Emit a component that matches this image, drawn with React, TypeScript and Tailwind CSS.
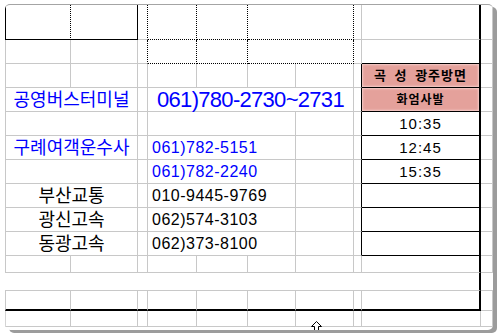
import React from 'react';

// grid line styles per side
const R: Record<string, string> = {
  g: 'border-r border-r-[#c8c8c8]',
  k: 'border-r border-r-black',
  d: 'border-r border-r-black [border-right-style:dotted]!',
  K: 'border-r-2 border-r-black',
  n: '',
};
const B: Record<string, string> = {
  g: 'border-b border-b-[#c8c8c8]',
  k: 'border-b border-b-black',
  d: 'border-b border-b-black [border-bottom-style:dotted]!',
  K: 'border-b-2 border-b-black',
  n: '',
};

type CellProps = {
  w: string;
  r?: string;
  b?: string;
  className?: string;
  children?: React.ReactNode;
};

function Cell({ w, r = 'g', b = 'g', className = '', children }: CellProps) {
  return (
    <div className={`${w} ${R[r]} ${B[b]} shrink-0 flex items-center leading-none whitespace-nowrap ${className}`}>
      {children}
    </div>
  );
}

const lines = [
  { name: '', blue: false, phone: '', phoneBlue: false, time: '10:35' },
  { name: '구례여객운수사', blue: true, phone: '061)782-5151', phoneBlue: true, time: '12:45' },
  { name: '', blue: false, phone: '061)782-2240', phoneBlue: true, time: '15:35' },
  { name: '부산교통', blue: false, phone: '010-9445-9769', phoneBlue: false, time: '' },
  { name: '광신고속', blue: false, phone: '062)574-3103', phoneBlue: false, time: '' },
  { name: '동광고속', blue: false, phone: '062)373-8100', phoneBlue: false, time: '' },
];

const pink = 'bg-[#e4a19b] shadow-[inset_0_0_2px_1px_#f4cdc9] justify-center font-bold';

export default function App() {
  return (
    <div className="w-[499px] h-[336px] overflow-hidden bg-white text-black font-['Liberation_Sans','Noto_Sans_CJK_KR',sans-serif]">
      <div className="relative ml-[5px] mt-[4px] w-[488px] h-[326px] overflow-hidden rounded-[5px] border-t border-t-[#a4a4a4] bg-white shadow-[4px_3px_0_#9c9c9c]">
        {/* top rows, dotted print block */}
        <div className="flex h-[35px]">
          <Cell w="w-[66px]" r="d" b="k" className="border-l border-l-black" />
          <Cell w="w-[67px]" r="k" b="k" />
          <Cell w="w-[10px]" r="d" />
          <Cell w="w-[49px]" r="d" b="d" />
          <Cell w="w-[51px]" r="d" b="d" />
          <Cell w="w-[106px]" r="d" b="d" />
          <Cell w="w-[8px]" />
          <Cell w="w-[119px]" r="K" />
          <Cell w="w-[12px]" />
        </div>
        <div className="flex h-[24px]">
          <Cell w="w-[66px]" className="border-l border-l-[#c8c8c8]" />
          <Cell w="w-[67px]" />
          <Cell w="w-[10px]" r="d" />
          <Cell w="w-[49px]" r="d" b="d" />
          <Cell w="w-[51px]" r="d" b="d" />
          <Cell w="w-[106px]" r="d" b="d" />
          <Cell w="w-[8px]" />
          <Cell w="w-[119px]" r="K" b="k" />
          <Cell w="w-[12px]" />
        </div>
        <div className="flex h-[24px]">
          <Cell w="w-[66px]" className="border-l border-l-[#c8c8c8]" />
          <Cell w="w-[67px]" />
          <Cell w="w-[10px]" />
          <Cell w="w-[49px]" />
          <Cell w="w-[51px]" />
          <Cell w="w-[48px]" />
          <Cell w="w-[58px]" />
          <Cell w="w-[8px]" r="k" />
          <Cell w="w-[119px]" r="K" b="k" className={`${pink} text-[13px] tracking-[1px] [word-spacing:3px]`}>
            곡 성 광주방면
          </Cell>
          <Cell w="w-[12px]" />
        </div>
        <div className="flex h-[24px]">
          <Cell w="w-[133px]" className="border-l border-l-[#c8c8c8] justify-center text-[18px] text-[#0000ff]">
            공영버스터미널
          </Cell>
          <Cell w="w-[10px]" />
          <Cell w="w-[206px]" className="justify-center text-[22px] tracking-[-0.7px] text-[#0000ff]">
            061)780-2730~2731
          </Cell>
          <Cell w="w-[8px]" r="k" />
          <Cell w="w-[119px]" r="K" b="k" className={`${pink} text-[12px] tracking-[1px]`}>
            화엄사발
          </Cell>
          <Cell w="w-[12px]" />
        </div>

        {/* company rows with timetable */}
        {lines.map((l, i) => (
          <div key={i} className="flex h-[24px]">
            <Cell
              w="w-[133px]"
              className={`border-l border-l-[#c8c8c8] justify-center text-[18px] ${l.blue ? 'text-[#0000ff]' : 'text-black'}`}
            >
              {l.name}
            </Cell>
            <Cell w="w-[10px]" />
            <Cell
              w="w-[148px]"
              className={`pl-[4px] text-[16px] tracking-[0.5px] ${l.phoneBlue ? 'text-[#0000ff]' : 'text-black'}`}
            >
              {l.phone}
            </Cell>
            <Cell w="w-[58px]" />
            <Cell w="w-[8px]" r="k" />
            <Cell w="w-[119px]" r="K" b="k" className="justify-center text-[15px] tracking-[1px]">
              {l.time}
            </Cell>
            <Cell w="w-[12px]" />
          </div>
        ))}

        <div className="flex h-[17px]">
          <Cell w="w-[66px]" className="border-l border-l-[#c8c8c8]" />
          <Cell w="w-[67px]" />
          <Cell w="w-[10px]" />
          <Cell w="w-[49px]" />
          <Cell w="w-[51px]" />
          <Cell w="w-[48px]" />
          <Cell w="w-[58px]" />
          <Cell w="w-[8px]" />
          <Cell w="w-[119px]" r="K" />
          <Cell w="w-[12px]" />
        </div>
        {/* page gap */}
        <div className="flex h-[18px]">
          <Cell w="w-[357px]" r="n" />
          <Cell w="w-[119px]" r="K" />
          <Cell w="w-[12px]" r="n" />
        </div>
        <div className="flex h-[20px]">
          <Cell w="w-[66px]" b="K" className="border-l border-l-[#c8c8c8]" />
          <Cell w="w-[67px]" b="K" />
          <Cell w="w-[10px]" b="K" />
          <Cell w="w-[49px]" b="K" />
          <Cell w="w-[51px]" b="K" />
          <Cell w="w-[48px]" b="K" />
          <Cell w="w-[58px]" b="K" />
          <Cell w="w-[8px]" b="K" />
          <Cell w="w-[119px]" r="K" b="K" />
          <Cell w="w-[12px]" />
        </div>
        <div className="flex h-[16px]">
          <Cell w="w-[66px]" className="border-l border-l-[#d4d4d4]" />
          <Cell w="w-[67px]" />
          <Cell w="w-[10px]" />
          <Cell w="w-[49px]" />
          <Cell w="w-[51px]" />
          <Cell w="w-[48px]" />
          <Cell w="w-[58px]" />
          <Cell w="w-[8px]" />
          <Cell w="w-[119px]" />
          <Cell w="w-[12px]" />
        </div>

        {/* mouse cursor over the sheet */}
        <svg className="absolute left-[306px] top-[316px]" width="11" height="10" viewBox="0 0 11 10">
          <path d="M5.5 0.5 L10.5 5.5 L7.5 5.5 L7.5 9.5 L3.5 9.5 L3.5 5.5 L0.5 5.5 Z" fill="white" stroke="black" strokeWidth="1" />
        </svg>
      </div>
    </div>
  );
}
